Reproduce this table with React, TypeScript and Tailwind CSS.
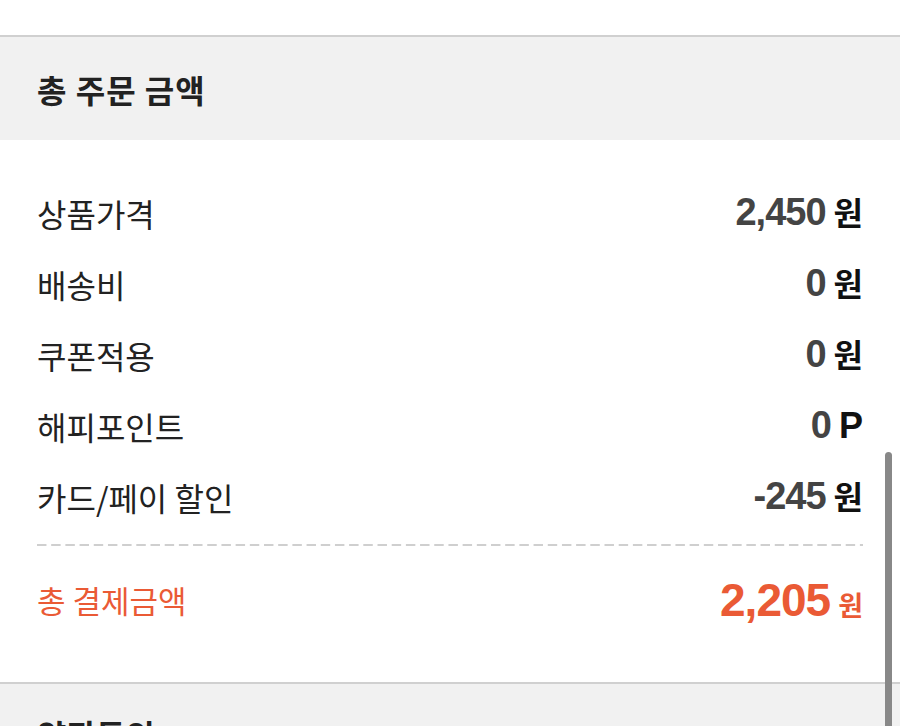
import React from 'react';

const rows = [
  { label: '상품가격', value: '2,450', unit: '원' },
  { label: '배송비', value: '0', unit: '원' },
  { label: '쿠폰적용', value: '0', unit: '원' },
  { label: '해피포인트', value: '0', unit: 'P' },
  { label: '카드/페이 할인', value: '-245', unit: '원' },
];

const kr = "font-['Noto_Sans_CJK_KR',sans-serif]";
const num = "font-['Liberation_Sans','Noto_Sans_CJK_KR',sans-serif]";

export default function App() {
  return (
    <div className="relative h-[726px] w-[900px] overflow-hidden bg-white">
      <div className="h-[35px] bg-white" />

      <section className="border-t-2 border-[#d0d0d0] bg-[#f1f1f1] h-[105px] flex items-center px-[37px]">
        <h2 className={`${kr} text-[32px] font-bold text-[#222] tracking-[1px]`}>
          총 주문 금액
        </h2>
      </section>

      <section className="bg-white px-[37px] pt-[37px] h-[542px]">
        {rows.map((row) => (
          <div key={row.label} className="h-[71px] flex items-center justify-between">
            <span className={`${kr} text-[32px] text-[#222]`}>{row.label}</span>
            <span className="flex items-baseline gap-[8px]">
              <span className={`${num} text-[38px] font-bold tracking-[-1px] text-[#444]`}>
                {row.value}
              </span>
              <span
                className={
                  row.unit === 'P'
                    ? `${num} text-[36px] font-bold text-[#111]`
                    : `${kr} text-[32px] font-bold text-[#111]`
                }
              >
                {row.unit}
              </span>
            </span>
          </div>
        ))}

        <div className="mt-[12px] h-[2px] bg-[linear-gradient(to_right,#cfcfcf_9px,transparent_9px)] bg-[length:14.2px_2px]" />

        <div className="h-[108px] flex items-center justify-between">
          <span className={`${kr} text-[31px] text-[#ea5a35]`}>총 결제금액</span>
          <span className="flex items-baseline gap-[8px]">
            <span className={`${num} text-[46px] font-bold tracking-[-1px] text-[#ea5a35]`}>
              2,205
            </span>
            <span className={`${kr} text-[27px] font-bold text-[#ea5a35]`}>원</span>
          </span>
        </div>
      </section>

      <section className="border-t-2 border-[#d0d0d0] bg-[#f1f1f1] h-[120px] px-[37px] pt-[26px]">
        <h2 className={`${kr} text-[32px] font-bold text-[#222]`}>약관동의</h2>
      </section>

      <div className="absolute right-[8px] top-[452px] bottom-0 w-[7px] rounded-t-full bg-[#888]" />
    </div>
  );
}
